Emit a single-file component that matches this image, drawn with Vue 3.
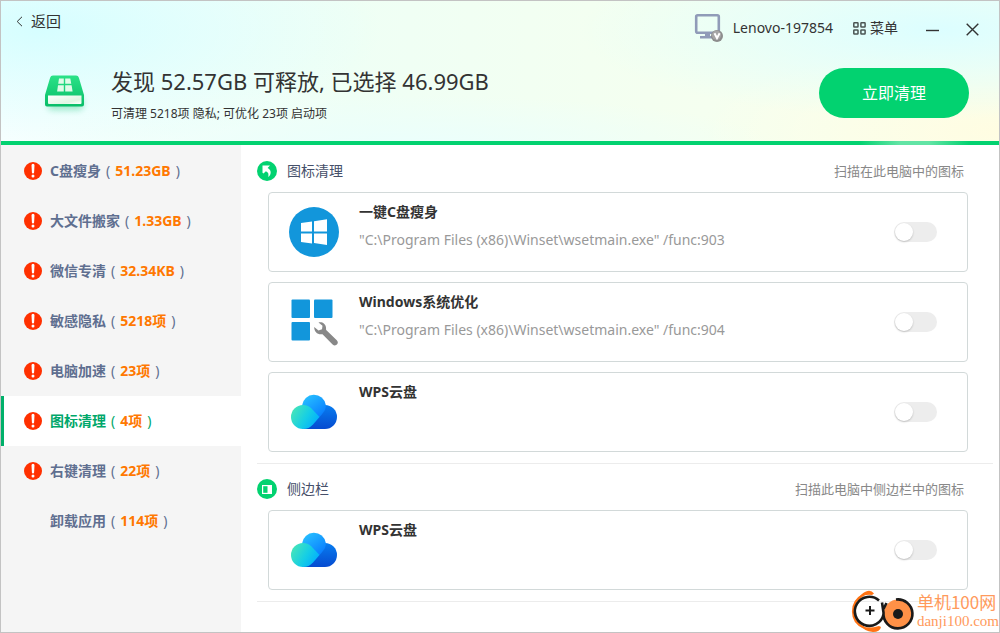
<script setup>
import { ref } from 'vue'

const active = ref(5)

const menu = [
  { name: 'C盘瘦身', value: '51.23GB', alert: true },
  { name: '大文件搬家', value: '1.33GB', alert: true },
  { name: '微信专清', value: '32.34KB', alert: true },
  { name: '敏感隐私', value: '5218项', alert: true },
  { name: '电脑加速', value: '23项', alert: true },
  { name: '图标清理', value: '4项', alert: true },
  { name: '右键清理', value: '22项', alert: true },
  { name: '卸载应用', value: '114项', alert: false },
]

const sections = ref([
  {
    icon: 'shortcut',
    title: '图标清理',
    note: '扫描在此电脑中的图标',
    items: [
      { icon: 'windows', name: '一键C盘瘦身', path: '"C:\\Program Files (x86)\\Winset\\wsetmain.exe" /func:903', on: false },
      { icon: 'tools', name: 'Windows系统优化', path: '"C:\\Program Files (x86)\\Winset\\wsetmain.exe" /func:904', on: false },
      { icon: 'cloud', name: 'WPS云盘', path: '', on: false },
    ],
  },
  {
    icon: 'panel',
    title: '侧边栏',
    note: '扫描此电脑中侧边栏中的图标',
    items: [{ icon: 'cloud', name: 'WPS云盘', path: '', on: false }],
  },
])
</script>

<template>
  <div class="window">
    <header class="header">
      <div class="titlebar">
        <button class="plain back" type="button">
          <svg width="7" height="11" viewBox="0 0 7 11" fill="none" stroke="#333" aria-hidden="true"><path d="M6 .8 1.2 5.5 6 10.2" /></svg>
          返回
        </button>
        <div class="tools">
          <span class="device">
            <svg width="30" height="30" viewBox="0 0 30 30" aria-hidden="true">
              <rect x="2.2" y="2.2" width="22.6" height="17.6" rx="1.5" fill="none" stroke="#909bb8" stroke-width="2.6" />
              <path d="M11 20h5v3h-5zM6 23h13v2.6H6z" fill="#909bb8" />
              <circle cx="23" cy="23" r="6" fill="#8d8d8d" />
              <circle cx="22.5" cy="22.2" r="4.6" fill="#a6a6a6" />
              <path d="m20.5 20.3 2.5 4.9 2.6-4.9" fill="none" stroke="#fff" stroke-width="2" />
            </svg>
            Lenovo-197854
          </span>
          <button class="plain menu-button" type="button">
            <svg width="13" height="13" viewBox="0 0 13 13" fill="none" stroke="#4b5553" stroke-width="1.5" aria-hidden="true">
              <rect x=".8" y=".8" width="4.200" height="4.200" rx=".6" /><rect x="7.900" y=".8" width="4.200" height="4.200" rx=".6" />
              <rect x=".8" y="7.900" width="4.200" height="4.200" rx=".6" /><rect x="7.900" y="7.900" width="4.200" height="4.200" rx=".6" />
            </svg>
            菜单
          </button>
          <button class="plain control" type="button" aria-label="最小化">
            <svg width="13" height="13" viewBox="0 0 13 13" aria-hidden="true"><path d="M0 7.500h13" stroke="#333" stroke-width="1.400" /></svg>
          </button>
          <button class="plain control" type="button" aria-label="关闭">
            <svg width="13" height="13" viewBox="0 0 13 13" aria-hidden="true"><path d="m.7.7 11.600 11.600M12.300.7.7 12.300" stroke="#333" stroke-width="1.400" /></svg>
          </button>
        </div>
      </div>
      <div class="hero">
        <svg class="disk" width="56" height="56" viewBox="0 0 56 56" aria-hidden="true">
          <defs>
            <linearGradient id="disk-top" x1="0" y1="0" x2="0" y2="1"><stop offset="0" stop-color="#2be287" /><stop offset="1" stop-color="#08bd68" /></linearGradient>
            <linearGradient id="disk-face" x1="0" y1="0" x2="1" y2="1"><stop offset="0" stop-color="#fff" /><stop offset=".7" stop-color="#dff6e3" /><stop offset="1" stop-color="#fff" /></linearGradient>
            <filter id="disk-blur" x="-30%" y="-60%" width="160%" height="220%"><feGaussianBlur stdDeviation="3" /></filter>
          </defs>
          <rect x="11" y="30" width="35" height="13" rx="4" fill="#08bd68" opacity=".35" filter="url(#disk-blur)" />
          <path d="M16 8.500h23a3 3 0 0 1 2.900 2.200L47 28v9.500a2 2 0 0 1-2 2H10a2 2 0 0 1-2-2V28l5.100-17.300A3 3 0 0 1 16 8.500z" fill="url(#disk-top)" />
          <path d="M11 28.500h33.500V36a1 1 0 0 1-1 1H12a1 1 0 0 1-1-1z" fill="url(#disk-face)" />
          <path d="M22 11.500h4.800v5.300h-5.600zM28.200 11.500h5.100l1 5.300h-6.100zM21 18.300h5.800v6.200h-6.700zM28.200 18.300h6.400l1 6.200h-7.400z" fill="#dffbe8" />
        </svg>
        <div class="summary">
          <h1>发现 52.57GB 可释放, 已选择 46.99GB</h1>
          <p>可清理 5218项 隐私; 可优化 23项 启动项</p>
        </div>
        <button class="clean" type="button">立即清理</button>
      </div>
      <div class="progress"></div>
    </header>

    <div class="body">
      <nav class="sidebar">
        <button
          v-for="(item, i) in menu"
          :key="item.name"
          type="button"
          class="plain entry"
          :class="{ active: active === i }"
          @click="active = i"
        >
          <span class="mark">
            <svg v-if="item.alert" width="18" height="18" viewBox="0 0 18 18" aria-hidden="true">
              <circle cx="9" cy="9" r="9" fill="#ff3000" />
              <path d="M7.500 3.200a1.500 1.500 0 0 1 3 0L10.100 10.500a1.100 1.100 0 0 1-2.200 0z" fill="#fff" />
              <circle cx="9" cy="14" r="1.500" fill="#fff" />
            </svg>
          </span>
          <span class="label"><b>{{ item.name }}</b><i>(</i><b class="value">{{ item.value }}</b><i>)</i></span>
        </button>
      </nav>

      <main class="content">
        <section v-for="section in sections" :key="section.title" class="section">
          <div class="section-head">
            <svg width="20" height="20" viewBox="0 0 20 20" aria-hidden="true">
              <circle cx="10" cy="10" r="10" fill="#02d270" />
              <path v-if="section.icon === 'shortcut'" d="M5.500 4.500h7.500l-2.400 2.400c3.600 1.500 4.400 6.200.6 9.100.7-3 .2-4.700-2.300-5.700l-2.400 2.300-1-.8z" fill="#fff" />
              <template v-else>
                <rect x="5.600" y="6.600" width="8.800" height="7.800" fill="none" stroke="#fff" stroke-width="1.200" />
                <path d="M10.500 7h4v7h-4z" fill="#fff" />
              </template>
            </svg>
            <h2>{{ section.title }}</h2>
            <span class="note">{{ section.note }}</span>
          </div>
          <div class="cards">
            <label v-for="item in section.items" :key="item.name" class="card">
              <svg v-if="item.icon === 'windows'" width="50" height="50" viewBox="0 0 50 50" aria-hidden="true">
                <circle cx="25" cy="25" r="25" fill="#1296db" />
                <path d="m12 16 11-1.500v10H12zM25 14.200l13-1.900v12.200H25zM12 26.500h11v10L12 35zM25 26.500h13v11.400l-13-1.800z" fill="#fff" />
              </svg>
              <svg v-else-if="item.icon === 'tools'" width="50" height="50" viewBox="0 0 50 50" aria-hidden="true">
                <g fill="#1296db"><rect x="2.500" y="2.500" width="18.500" height="18.500" rx="1" /><rect x="25" y="2.500" width="18.500" height="18.500" rx="1" /><rect x="2.500" y="25" width="18.500" height="18.500" rx="1" /></g>
                <path d="M29.500 25.500c3.500-1 7 1 7.500 5 .1 1 0 2 .2 2.500l10.600 10.200c3 3.200-1.200 7-4.200 4.200L33.500 37.200c-5 .8-8.300-2.400-8.300-7.200l4.300 3.500 3.500-1.200.5-3.500z" fill="#888" />
              </svg>
              <svg v-else width="50" height="50" viewBox="0 0 50 50" aria-hidden="true">
                <defs>
                  <linearGradient id="cloud-back" x1="0" y1="0" x2="0" y2="1"><stop offset="0" stop-color="#087df0" /><stop offset="1" stop-color="#064bd0" /></linearGradient>
                  <linearGradient id="cloud-top" x1="0" y1="0" x2=".8" y2="1"><stop offset="0" stop-color="#2bc8ff" /><stop offset="1" stop-color="#087cff" /></linearGradient>
                  <linearGradient id="cloud-front" x1="0" y1=".2" x2="1" y2=".7"><stop offset="0" stop-color="#49e6b6" /><stop offset=".55" stop-color="#16cee5" /><stop offset="1" stop-color="#00acff" /></linearGradient>
                </defs>
                <path d="M13 42 30 20q3-2 6-2a12 12 0 0 1 0 24z" fill="url(#cloud-back)" />
                <path d="M13 18.500a12 12 0 0 1 23.800-.5c.2 4-1.500 7-6.300 12L20 28z" fill="url(#cloud-top)" />
                <path d="M14 18a12 12 0 0 0 0 24c4.500 0 7-1.500 10-4.500l6.500-7.500-8.500-9q-3.200-3-8-3z" fill="url(#cloud-front)" />
              </svg>
              <span class="info">
                <strong>{{ item.name }}</strong>
                <span class="path">{{ item.path }}</span>
              </span>
              <input v-model="item.on" class="switch" type="checkbox" />
            </label>
          </div>
        </section>
      </main>
    </div>

    <div class="watermark">
      <svg width="64" height="42" viewBox="0 0 64 42" fill="none" aria-hidden="true">
        <path d="M13 4.500C-1.500 12-1.500 31 13 37.500" stroke="#ff7315" stroke-width="2.400" />
        <path d="M7 8.500Q11 3 15 1.500q5-2 8 2L21 5Q13 4 7 8.500zM7 34q8 6 21 2l2 1q-1 5-8 5-9-1-15-8z" fill="#ff7315" />
        <path d="M28 10.500a14.500 14.500 0 1 0 4.500 14" stroke="#1a1a1a" stroke-width="2.600" />
        <path d="M19 16v9M14.500 20.500h9" stroke="#1a1a1a" stroke-width="2" />
        <circle cx="47" cy="24" r="14.500" fill="#ff9147" />
        <path d="M45 9.500a14.500 14.500 0 1 1-12.500 13L31 12.500M32.500 19l3-6" stroke="#1a1a1a" stroke-width="2.600" />
        <circle cx="47" cy="24" r="5" fill="#1a1a1a" />
      </svg>
      <span class="brand"><span>单机100网</span><span class="domain">danji100.com</span></span>
    </div>
  </div>
</template>

<style>
body {
  background: #fff;
}
</style>

<style scoped>
.window {
  position: relative;
  box-sizing: border-box;
  min-height: 100vh;
  display: flex;
  flex-direction: column;
  border: 1px solid #c3c3c3;
  background: #fff;
  color: #333;
  font: 14px/20px "Noto Sans", "Noto Sans CJK SC", sans-serif;
}
.plain {
  padding: 0;
  border: 0;
  background: none;
  color: inherit;
  font: inherit;
}
.header {
  background:
    radial-gradient(ellipse 360px 90px at 94% 20%, #dcfeff 0%, #dcfeff00 100%),
    radial-gradient(ellipse 300px 90px at 100% 90%, #fffde2 0%, #fffde200 100%),
    radial-gradient(ellipse 340px 120px at 4% 20%, #d6feff 0%, #d6feff00 100%),
    radial-gradient(ellipse 380px 50px at 40% 100%, #ebfffc 0%, #ebfffc00 100%),
    linear-gradient(90deg, #f8ffff 0%, #effff5 35%, #f4fff0 65%, #fafff0 100%);
}
.titlebar {
  display: flex;
  justify-content: space-between;
  height: 54px;
}
.back {
  display: flex;
  align-items: center;
  gap: 8px;
  height: 40px;
  margin-left: 15px;
  font-size: 15px;
}
.tools {
  display: flex;
  align-items: center;
  margin-right: 20px;
}
.device,
.menu-button {
  display: flex;
  align-items: center;
}
.device {
  gap: 9px;
  margin-right: 20px;
}
.menu-button {
  gap: 4px;
  margin-right: 28px;
}
.control {
  display: flex;
  margin-top: 2px;
}
.control + .control {
  margin-left: 27px;
}
.hero {
  display: flex;
  align-items: flex-start;
  padding: 12px 30px 0 36px;
  height: 74px;
}
.summary {
  flex: 1;
  margin: -2px 0 0 18px;
}
.summary h1 {
  margin: 0;
  font-size: 22px;
  line-height: 32px;
  font-weight: 400;
}
.summary p {
  margin: 7px 0 0;
  font-size: 12px;
  line-height: 20px;
}
.clean {
  width: 150px;
  height: 50px;
  margin-top: 1px;
  border: 0;
  border-radius: 25px;
  background: #02d270;
  color: #fff;
  font: inherit;
  font-size: 16px;
}
.progress {
  height: 4px;
  background: linear-gradient(90deg, #02d270 86%, #62e4a5 90%, #62e4a5 93%, #02d270 97%);
}
.body {
  flex: 1;
  display: flex;
}
.sidebar {
  width: 240px;
  padding-top: 1px;
  background: #f5f5f5;
}
.entry {
  box-sizing: border-box;
  width: 100%;
  height: 50px;
  display: flex;
  align-items: center;
  gap: 8px;
  padding-left: 20px;
  border-left: 3px solid transparent;
  color: #5f6f90;
  text-align: left;
}
.entry.active {
  border-left-color: #00b06a;
  background: #fff;
  color: #00a76a;
}
.mark {
  display: flex;
  width: 18px;
}
.label {
  display: flex;
  gap: 5px;
}
.label i {
  font-style: normal;
}
.value {
  color: #ff7800;
}
.content {
  flex: 1;
  padding: 1px 6px 0 16px;
}
.section {
  padding: 15px 0 11px;
  border-bottom: 1px solid #ececec;
}
.section-head {
  display: flex;
  align-items: center;
  gap: 10px;
  padding-right: 29px;
}
.section-head h2 {
  flex: 1;
  margin: 0;
  color: #46506a;
  font-size: 14px;
  font-weight: 400;
}
.note {
  color: #888;
  font-size: 13px;
}
.cards {
  display: flex;
  flex-direction: column;
  gap: 10px;
  margin: 11px 25px 0 11px;
}
.card {
  box-sizing: border-box;
  height: 80px;
  display: flex;
  align-items: center;
  padding: 0 30px 0 20px;
  border: 1px solid #d2d9d9;
  border-radius: 4px;
}
.info {
  flex: 1;
  align-self: flex-start;
  display: flex;
  flex-direction: column;
  gap: 8px;
  margin: 9px 0 0 20px;
}
.path {
  color: #999;
}
.switch {
  appearance: none;
  width: 43px;
  height: 20px;
  margin: 0;
  border-radius: 10px;
  background: #ededed;
}
.switch::before {
  content: "";
  display: block;
  width: 18px;
  height: 18px;
  margin: 1px;
  border-radius: 50%;
  background: #fff;
  box-shadow: 0 1px 2px #0003;
}
.switch:checked {
  background: #02d270;
}
.switch:checked::before {
  margin-left: 24px;
}
.watermark {
  position: absolute;
  right: 0;
  bottom: 0;
  display: flex;
  align-items: center;
  gap: 2px;
  color: #ff9a5c;
  pointer-events: none;
}
.brand {
  display: flex;
  flex-direction: column;
  font: 17px/20px "Noto Sans CJK SC", sans-serif;
}
.domain {
  font: 15px/18px "Liberation Serif", serif;
}
</style>
